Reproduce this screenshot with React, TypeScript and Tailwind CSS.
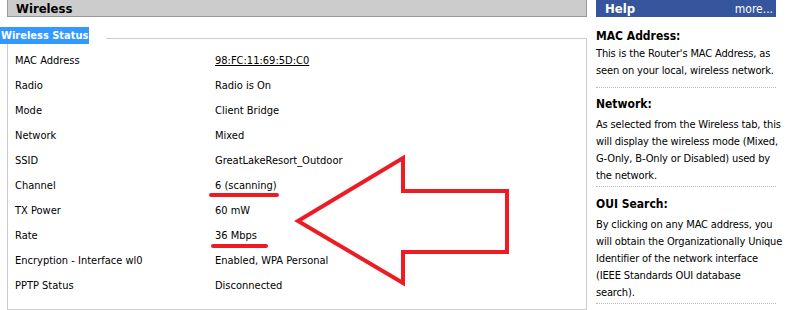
const rows: [string, string][] = [
  ['MAC Address', '98:FC:11:69:5D:C0'],
  ['Radio', 'Radio is On'],
  ['Mode', 'Client Bridge'],
  ['Network', 'Mixed'],
  ['SSID', 'GreatLakeResort_Outdoor'],
  ['Channel', '6 (scanning)'],
  ['TX Power', '60 mW'],
  ['Rate', '36 Mbps'],
  ['Encryption - Interface wl0', 'Enabled, WPA Personal'],
  ['PPTP Status', 'Disconnected'],
];

const help: { title: string; lines: string[] }[] = [
  {
    title: 'MAC Address:',
    lines: ["This is the Router's MAC Address, as", 'seen on your local, wireless network.'],
  },
  {
    title: 'Network:',
    lines: [
      'As selected from the Wireless tab, this',
      'will display the wireless mode (Mixed,',
      'G-Only, B-Only or Disabled) used by',
      'the network.',
    ],
  },
  {
    title: 'OUI Search:',
    lines: [
      'By clicking on any MAC address, you',
      'will obtain the Organizationally Unique',
      'Identifier of the network interface',
      '(IEEE Standards OUI database',
      'search).',
    ],
  },
];

export default function App() {
  return (
    <div
      className="relative w-[786px] h-[310px] overflow-hidden bg-white text-black"
      style={{ fontFamily: '"DejaVu Sans Condensed", "DejaVu Sans", sans-serif' }}
    >
      <div className="flex">
        {/* Main column */}
        <div className="w-[587px] flex flex-col">
          <div className="ml-[7px] h-[17px] bg-[#cccccc] border-l border-r border-b border-[#999999] flex items-center pl-[8px]">
            <span className="text-[13px] font-bold leading-none">Wireless</span>
          </div>

          {/* Fieldset */}
          <div className="mt-[10px] flex h-[17px]">
            <span className="bg-[#3399ff] text-white font-bold text-[11px] leading-[17px] px-[1px]">
              Wireless Status
            </span>
            <div className="flex-1 ml-[17px] mt-[11px] border-t border-r border-[#cccccc]" />
          </div>
          <div className="ml-[7px] h-[266px] border-l border-r border-b border-[#cccccc] pt-[5px]">
            {rows.map(([label, value]) => (
              <div key={label} className="flex h-[25px] items-center text-[11px]">
                <span className="w-[207px] pl-[7px]">{label}</span>
                <span className={label === 'MAC Address' ? 'underline' : ''}>{value}</span>
              </div>
            ))}
          </div>
        </div>

        {/* Help column */}
        <div className="ml-[9px] w-[180px] flex flex-col">
          <div className="h-[17px] bg-[#36559c] flex items-center justify-between pl-[9px] pr-[3px] text-white">
            <span className="text-[13px] font-bold leading-none">Help</span>
            <span className="text-[12px] leading-none">more...</span>
          </div>
          <div className="pt-[11px] text-[11px] leading-[17px] tracking-[-0.15px]">
            {help.map((s, i) => (
              <div
                key={s.title}
                className={
                  i === 0
                    ? 'border-b border-dotted border-[#bbbbbb] pb-[8px] mb-[8px]'
                    : 'border-b border-dotted border-[#bbbbbb] pb-[2px] mb-[9px]'
                }
              >
                <div className={i === 0 ? 'font-bold text-[12px] tracking-normal' : 'font-bold text-[12px] tracking-normal mb-[3px]'}>
                  {s.title}
                </div>
                {s.lines.map((l) => (
                  <div key={l} className="whitespace-nowrap">{l}</div>
                ))}
              </div>
            ))}
          </div>
        </div>
      </div>

      {/* Red annotation */}
      <svg className="absolute left-0 top-0 pointer-events-none" width="786" height="310">
        <polygon
          points="298,221 403,158 403,191 507,191 507,252 403,252 403,283"
          fill="none"
          stroke="#ed1c24"
          strokeWidth="4"
          strokeLinejoin="miter"
        />
        <line x1="211" y1="195" x2="277" y2="195" stroke="#ed1c24" strokeWidth="4" strokeLinecap="round" />
        <line x1="213" y1="246" x2="266" y2="246" stroke="#ed1c24" strokeWidth="4" strokeLinecap="round" />
      </svg>
    </div>
  );
}
